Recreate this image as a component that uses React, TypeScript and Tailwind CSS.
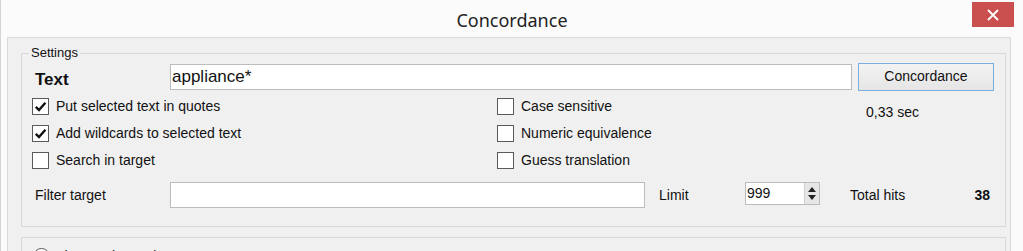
import React from 'react';

const font = { fontFamily: '"Liberation Sans", Arial, sans-serif' };

function CheckBox({ checked, label }: { checked?: boolean; label: string }) {
  return (
    <div className="flex items-center h-[27px]">
      <div className="w-[17px] h-[17px] bg-white border border-[#5a5a5a] flex items-center justify-center">
        {checked && (
          <svg width="13" height="13" viewBox="0 0 13 13">
            <path d="M1.8 6.8 L5 10 L11.4 2.8" fill="none" stroke="#111" strokeWidth="2.4" />
          </svg>
        )}
      </div>
      <span className="ml-[7px] text-[14px] text-[#111]">{label}</span>
    </div>
  );
}

function Radio({ checked, label }: { checked?: boolean; label: string }) {
  return (
    <div className="flex items-center">
      <div className="w-[17px] h-[17px] rounded-full bg-white border border-[#5a5a5a] flex items-center justify-center">
        {checked && <div className="w-[9px] h-[9px] rounded-full bg-[#111]" />}
      </div>
      <span className="ml-[6px] text-[14px] text-[#111]">{label}</span>
    </div>
  );
}

export default function App() {
  return (
    <div className="w-[1023px] h-[251px] bg-[#fbfbfb] overflow-hidden relative border-l border-[#d4d4d4]" style={font}>
      {/* Title bar */}
      <div className="h-[37px] flex items-center justify-center relative pt-[3px]">
        <span className="text-[18px] text-[#222]" style={{ fontFamily: '"Noto Sans", "Open Sans", sans-serif' }}>
          Concordance
        </span>
        <div className="absolute right-[9px] top-[2px] w-[42px] h-[25px] bg-[#c9504f] flex items-center justify-center">
          <svg width="12" height="12" viewBox="0 0 12 12">
            <path d="M1 1 L11 11 M11 1 L1 11" stroke="#fff" strokeWidth="1.8" />
          </svg>
        </div>
      </div>

      {/* Client area */}
      <div className="ml-[6px] w-[1004px] h-[230px] bg-[#f0f0f0] border border-[#dadada] pl-[13px] pr-[4px] pt-[15px]">
        {/* Settings group */}
        <div className="relative h-[174px] border border-[#d8d8d8] pl-[10px] pt-[8px]">
          <span className="absolute left-[7px] top-[-9px] bg-[#f0f0f0] px-[2px] text-[13px] leading-[16px] text-[#111]">
            Settings
          </span>

          {/* Text row */}
          <div className="flex items-center h-[29px]">
            <div className="w-[138px] pl-[3px] mt-[6px] text-[17px] font-bold text-[#111]">Text</div>
            <div className="w-[682px] h-[26px] bg-white border border-[#bcbcbc] flex items-center pl-[1px] text-[17px] text-[#111]">
              appliance*
            </div>
            <div className="ml-[6px] w-[136px] h-[28px] border border-[#7aaee0] bg-gradient-to-b from-[#f3f3f3] to-[#e5e5e5] flex items-center justify-center text-[14px] text-[#111]">
              Concordance
            </div>
          </div>

          {/* Options */}
          <div className="flex mt-[2px]">
            <div className="w-[465px] flex flex-col">
              <CheckBox checked label="Put selected text in quotes" />
              <CheckBox checked label="Add wildcards to selected text" />
              <CheckBox label="Search in target" />
            </div>
            <div className="w-[361px] flex flex-col">
              <CheckBox label="Case sensitive" />
              <CheckBox label="Numeric equivalence" />
              <CheckBox label="Guess translation" />
            </div>
            <div className="pl-[8px] pt-[9px] text-[14px] text-[#111]">0,33 sec</div>
          </div>

          {/* Filter row */}
          <div className="flex items-center mt-[8px] h-[26px]">
            <div className="w-[138px] pl-[3px] text-[14px] text-[#111]">Filter target</div>
            <div className="w-[475px] h-[26px] bg-white border border-[#bcbcbc]" />
            <div className="w-[100px] pl-[14px] text-[14px] text-[#111]">Limit</div>
            <div className="w-[75px] h-[23px] -mt-[3px] bg-white border border-[#bcbcbc] flex items-stretch">
              <div className="flex-1 flex items-center pl-[1px] text-[14px] text-[#111]">999</div>
              <div className="w-[15px] bg-[#e6e6e6] border-l border-[#d0d0d0] flex flex-col items-center justify-center gap-[3px]">
                <svg width="8" height="5" viewBox="0 0 8 5">
                  <path d="M0 5 L4 0 L8 5 Z" fill="#222" />
                </svg>
                <svg width="8" height="5" viewBox="0 0 8 5">
                  <path d="M0 0 L4 5 L8 0 Z" fill="#222" />
                </svg>
              </div>
            </div>
            <div className="w-[123px] pl-[30px] text-[14px] text-[#111]">Total hits</div>
            <div className="w-[47px] text-[14px] font-bold text-[#111] text-right">38</div>
          </div>
        </div>

        {/* View group */}
        <div className="mt-[10px] h-[40px] border border-[#d8d8d8] pl-[11px] pt-[8px] flex">
          <div className="w-[466px]">
            <Radio label="Three-column view" />
          </div>
          <Radio checked label="Source + target" />
        </div>
      </div>
    </div>
  );
}
